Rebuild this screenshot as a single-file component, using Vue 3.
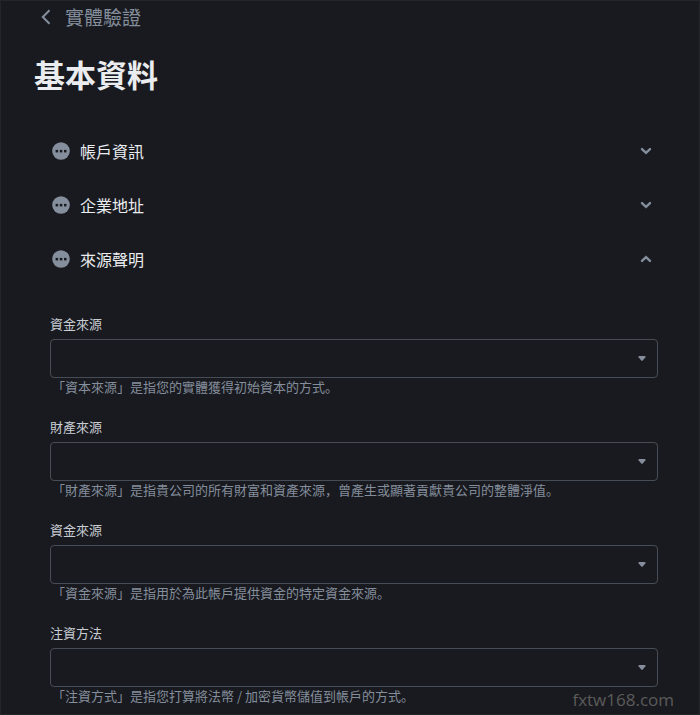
<script setup>
import { reactive, ref } from 'vue'

const sections = ref([
  { id: 'account', title: '帳戶資訊', open: false },
  { id: 'address', title: '企業地址', open: false },
  { id: 'source', title: '來源聲明', open: true },
])

const fields = [
  { id: 'capital', label: '資金來源', hint: '「資本來源」是指您的實體獲得初始資本的方式。' },
  { id: 'wealth', label: '財產來源', hint: '「財產來源」是指貴公司的所有財富和資產來源，曾產生或顯著貢獻貴公司的整體淨值。' },
  { id: 'funds', label: '資金來源', hint: '「資金來源」是指用於為此帳戶提供資金的特定資金來源。' },
  { id: 'method', label: '注資方法', hint: '「注資方式」是指您打算將法幣 / 加密貨幣儲值到帳戶的方式。' },
]

const answers = reactive({ capital: '', wealth: '', funds: '', method: '' })
</script>

<template>
  <main class="page">
    <nav class="crumb">
      <a href="#" class="back">
        <svg class="back-icon" viewBox="0 0 10 16" aria-hidden="true">
          <path d="M8.500 1.200 1.800 8l6.700 6.800" />
        </svg>
        <span>實體驗證</span>
      </a>
    </nav>
    <h1 class="title">基本資料</h1>

    <div class="sections">
      <section v-for="s in sections" :key="s.id">
        <button type="button" class="toggle" :aria-expanded="s.open" @click="s.open = !s.open">
          <svg class="status" viewBox="0 0 18 18" aria-hidden="true">
            <circle class="disc" cx="9" cy="9" r="8.800" />
            <rect x="3.600" y="7.900" width="2.500" height="2.500" />
            <rect x="7.800" y="7.900" width="2.500" height="2.500" />
            <rect x="12" y="7.900" width="2.500" height="2.500" />
          </svg>
          <span class="name">{{ s.title }}</span>
          <svg class="chevron" viewBox="0 0 12 8" aria-hidden="true">
            <path :d="s.open ? 'M2 5.900 6 2.200l4 3.700' : 'M2 2.100 6 5.800l4-3.700'" />
          </svg>
        </button>

        <form v-if="s.id === 'source' && s.open" class="form">
          <div v-for="f in fields" :key="f.id" class="field">
            <label :for="f.id" class="label">{{ f.label }}</label>
            <div class="control">
              <select :id="f.id" v-model="answers[f.id]" class="select" :aria-describedby="f.id + '-hint'">
                <option value=""></option>
              </select>
              <svg class="caret" viewBox="0 0 8 6" aria-hidden="true">
                <path d="M1.500 0h5q1.500 0 .9 1.200L5 4.200q-1 1-2 0L.6 1.200Q0 0 1.500 0z" />
              </svg>
            </div>
            <p :id="f.id + '-hint'" class="hint">{{ f.hint }}</p>
          </div>
        </form>
      </section>
    </div>

    <span class="site">fxtw168.com</span>
  </main>
</template>

<style>
body {
  background: #191a1f;
}
</style>

<style scoped>
.page {
  position: relative;
  box-sizing: border-box;
  min-height: 100vh;
  padding: 2px 41px 9px 33px;
  border: 1px solid #24252a;
  background: #191a1f;
  color: #eaecef;
  font-family: "Noto Sans CJK SC", "Noto Sans", sans-serif;
}

.crumb {
  padding-left: 7px;
}

.back {
  display: inline-flex;
  align-items: center;
  gap: 14px;
  color: #848e9c;
  font-size: 19px;
  line-height: 28px;
  text-decoration: none;
  vertical-align: top;
}

.back-icon {
  width: 10px;
  height: 16px;
  fill: none;
  stroke: #848e9c;
  stroke-width: 2;
}

.title {
  margin: 21px 0 28px;
  font-size: 31px;
  font-weight: 700;
  line-height: 44px;
}

.sections {
  padding-left: 16px;
}

.toggle {
  display: flex;
  align-items: center;
  gap: 10px;
  width: 100%;
  height: 54px;
  padding: 0 6px 0 2px;
  border: 0;
  background: transparent;
  color: #eaecef;
  font-family: inherit;
  font-size: 16px;
  line-height: 24px;
  text-align: left;
  cursor: pointer;
}

.status {
  width: 18px;
  height: 18px;
  fill: #191a1f;
}

.disc {
  fill: #848e9c;
}

.name {
  flex: 1;
}

.chevron {
  width: 12px;
  height: 8px;
  fill: none;
  stroke: #848e9c;
  stroke-width: 2.4;
  stroke-linecap: round;
}

.form {
  display: grid;
  gap: 21px;
  padding-top: 28px;
}

.label {
  display: block;
  margin-bottom: 5px;
  color: #c8cdd4;
  font-size: 13px;
  line-height: 20px;
}

.control {
  display: grid;
  align-items: center;
}

.select,
.caret {
  grid-area: 1 / 1;
}

.select {
  width: 100%;
  height: 39px;
  padding: 0 32px 0 12px;
  border: 1px solid #474d57;
  border-radius: 4px;
  background: transparent;
  color: #eaecef;
  font-family: inherit;
  font-size: 13px;
  appearance: none;
}

.caret {
  justify-self: end;
  width: 8px;
  height: 6px;
  margin-right: 12px;
  fill: #848e9c;
  pointer-events: none;
}

.hint {
  margin: 0;
  padding-left: 2px;
  color: #848e9c;
  font-size: 13px;
  line-height: 18px;
}

.site {
  position: absolute;
  right: 25px;
  bottom: 2px;
  color: #5b5b5a;
  font-family: "Open Sans", "Noto Sans", sans-serif;
  font-size: 17px;
  line-height: 24px;
}
</style>
